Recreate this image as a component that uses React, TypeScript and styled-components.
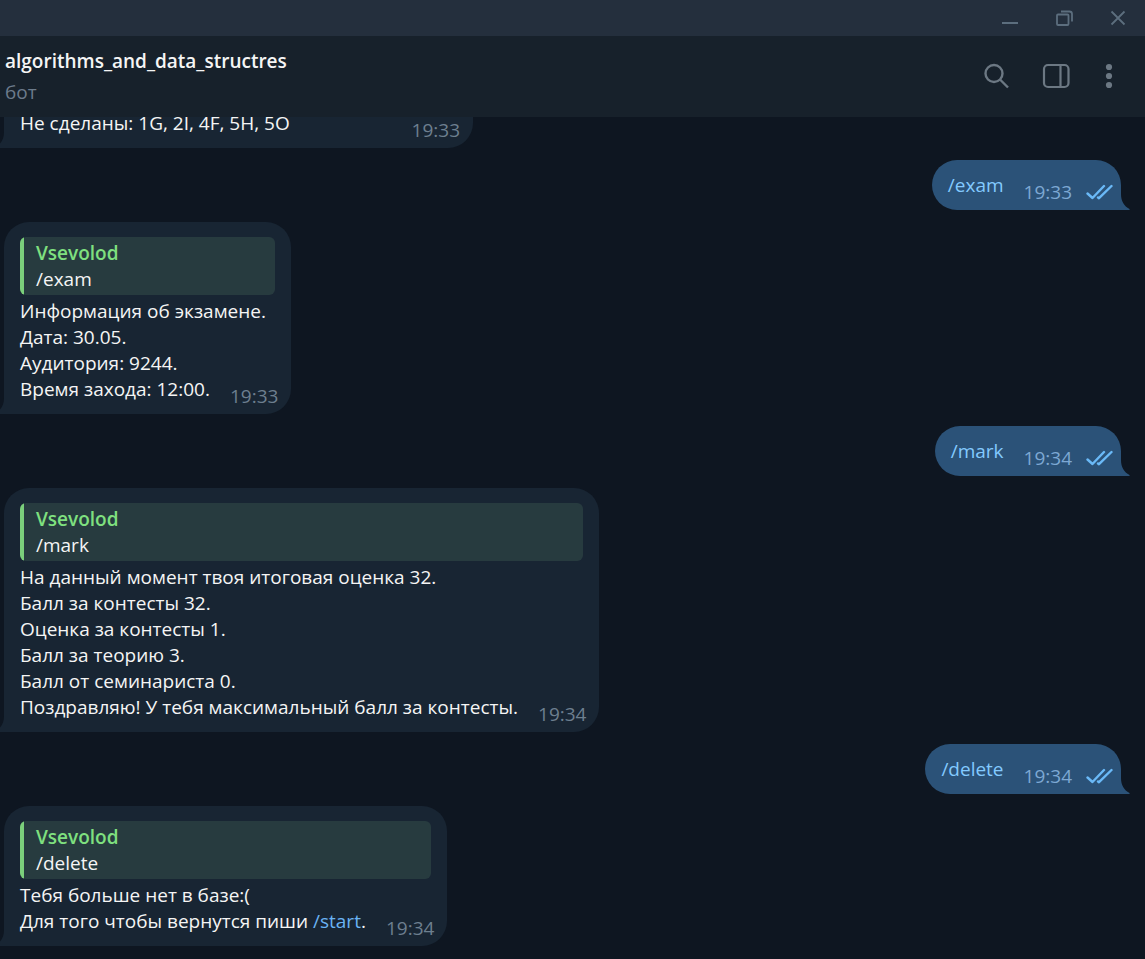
import React from "react";
import styled, { createGlobalStyle, css } from "styled-components";

const GlobalStyle = createGlobalStyle`
  * { box-sizing: border-box; }
  body {
    margin: 0;
    background: #0e1621;
    color: #f5f5f5;
    font-family: "Open Sans", "Noto Sans", sans-serif;
    font-size: 19px;
    line-height: 26px;
  }
`;

const Window = styled.div`
  display: flex;
  flex-direction: column;
  height: 100vh;
`;

const TitleBar = styled.div`
  display: flex;
  flex: none;
  justify-content: flex-end;
  height: 36px;
  background: #242f3d;
`;

const WindowButton = styled.button`
  display: flex;
  align-items: center;
  justify-content: center;
  width: 54px;
  padding: 0;
  border: 0;
  background: none;
  color: #5c6e7e;
`;

const Header = styled.header`
  display: flex;
  flex: none;
  align-items: center;
  justify-content: space-between;
  height: 81px;
  padding: 0 29px 1px 5px;
  background: #17212b;
`;

const Peer = styled.div`
  display: flex;
  flex-direction: column;
  gap: 5px;
`;

const PeerName = styled.h1`
  margin: 0;
  font-size: 19px;
  font-weight: 600;
  line-height: 26px;
`;

const PeerStatus = styled.span`
  color: #6c7b8b;
`;

const Actions = styled.div`
  display: flex;
  align-items: center;
  gap: 32px;
`;

const ActionButton = styled.button`
  display: flex;
  padding: 0;
  border: 0;
  background: none;
  color: #6c7883;
`;

const Chat = styled.main`
  display: flex;
  flex: 1;
  flex-direction: column;
  justify-content: flex-end;
  gap: 12px;
  min-height: 0;
  overflow: hidden;
  padding: 0 24px 13px 4px;
`;

const Bubble = styled.article<{ $out?: boolean; $continued?: boolean }>`
  position: relative;
  flex: none;
  max-width: 100%;
  padding: 12px 16px;
  ${({ $out }) =>
    $out
      ? css`
          align-self: flex-end;
          border-radius: 25px 25px 0 25px;
          background: #2b5278;
          color: #2b5278;
        `
      : css`
          align-self: flex-start;
          border-radius: 25px 25px 25px 0;
          background: #182533;
          color: #182533;
        `}
  ${({ $continued }) =>
    $continued &&
    css`
      min-width: 469px;
      padding-top: 38px;
    `}
`;

const TailShape = styled.svg<{ $out?: boolean }>`
  position: absolute;
  bottom: 0;
  ${({ $out }) => ($out ? "left: 100%;" : "right: 100%; transform: scaleX(-1);")}
`;

const Quote = styled.blockquote`
  margin: 3px 0;
  padding: 3px 16px;
  border-radius: 6px;
  background: linear-gradient(to right, #7bcf7b 4px, #273b3f 4px);
  color: #f5f5f5;
`;

const QuoteAuthor = styled.div`
  color: #7fe07f;
  font-weight: 600;
`;

const Line = styled.div`
  color: #f5f5f5;
`;

const LastLine = styled(Line)`
  display: flex;
  justify-content: space-between;
  gap: 20px;
`;

const Meta = styled.span<{ $out?: boolean }>`
  display: flex;
  align-items: center;
  gap: 14px;
  margin: 7px ${({ $out }) => ($out ? "-8px" : "-3px")} -7px 0;
  color: ${({ $out }) => ($out ? "#7da8d3" : "#6d7f8f")};
`;

const Command = styled.a<{ $out?: boolean }>`
  color: ${({ $out }) => ($out ? "#83caff" : "#6ab3f3")};
  text-decoration: none;
`;

function Tail({ out }: { out?: boolean }) {
  return (
    <TailShape $out={out} width="9" height="16" viewBox="0 0 9 16" aria-hidden="true">
      <path d="M0 0C0 7 3 12 8.500 15Q9.200 16 8 16H0Z" fill="currentColor" />
    </TailShape>
  );
}

function Ticks() {
  return (
    <svg width="27" height="17" viewBox="0 0 27 17" fill="none" stroke="#6ab9f7" strokeWidth="2.400" strokeLinecap="round" strokeLinejoin="round" role="img" aria-label="Прочитано">
      <path d="M1.500 9.500L6.500 14L18 2M12 13.500L13 14.200L25.500 2" />
    </svg>
  );
}

function Outgoing({ command, time }: { command: string; time: string }) {
  return (
    <Bubble $out>
      <LastLine>
        <Command $out href="#">{command}</Command>
        <Meta $out>
          <time>{time}</time>
          <Ticks />
        </Meta>
      </LastLine>
      <Tail out />
    </Bubble>
  );
}

type IncomingProps = {
  quote?: string;
  lines: React.ReactNode[];
  time: string;
  continued?: boolean;
};

function Incoming({ quote, lines, time, continued }: IncomingProps) {
  return (
    <Bubble $continued={continued}>
      {quote && (
        <Quote>
          <QuoteAuthor>Vsevolod</QuoteAuthor>
          <div>{quote}</div>
        </Quote>
      )}
      {lines.slice(0, -1).map((line, i) => (
        <Line key={i}>{line}</Line>
      ))}
      <LastLine>
        <span>{lines[lines.length - 1]}</span>
        <Meta>
          <time>{time}</time>
        </Meta>
      </LastLine>
      <Tail />
    </Bubble>
  );
}

export default function App() {
  return (
    <>
      <GlobalStyle />
      <Window>
        <TitleBar>
          <WindowButton aria-label="Свернуть">
            <svg width="18" height="18" viewBox="0 0 18 18" fill="none" stroke="currentColor" strokeWidth="2">
              <path d="M1 14H17" />
            </svg>
          </WindowButton>
          <WindowButton aria-label="Восстановить">
            <svg width="18" height="18" viewBox="0 0 18 18" fill="none" stroke="currentColor" strokeWidth="1.800">
              <rect x="2" y="5.500" width="11.500" height="10.500" rx="1" />
              <path d="M6 2.500H14.500Q17 2.500 17 5V12.500" />
            </svg>
          </WindowButton>
          <WindowButton aria-label="Закрыть">
            <svg width="18" height="18" viewBox="0 0 18 18" fill="none" stroke="currentColor" strokeWidth="1.800">
              <path d="M2.500 2.500L15.500 15.500M15.500 2.500L2.500 15.500" />
            </svg>
          </WindowButton>
        </TitleBar>
        <Header>
          <Peer>
            <PeerName>algorithms_and_data_structres</PeerName>
            <PeerStatus>бот</PeerStatus>
          </Peer>
          <Actions>
            <ActionButton aria-label="Поиск">
              <svg width="28" height="28" viewBox="0 0 28 28" fill="none" stroke="currentColor" strokeWidth="2.400">
                <circle cx="12" cy="11.500" r="8.500" />
                <path d="M18 17.500L26 25.500" />
              </svg>
            </ActionButton>
            <ActionButton aria-label="Информация">
              <svg width="28" height="28" viewBox="0 0 28 28" fill="none" stroke="currentColor" strokeWidth="2.200">
                <rect x="2" y="3" width="24.500" height="22" rx="4" />
                <path d="M18.500 3V25" />
              </svg>
            </ActionButton>
            <ActionButton aria-label="Меню">
              <svg width="14" height="28" viewBox="0 0 14 28" fill="currentColor">
                <circle cx="7" cy="5" r="3.100" />
                <circle cx="7" cy="14" r="3.100" />
                <circle cx="7" cy="23" r="3.100" />
              </svg>
            </ActionButton>
          </Actions>
        </Header>
        <Chat>
          <Incoming continued lines={["Не сделаны: 1G, 2I, 4F, 5H, 5O"]} time="19:33" />
          <Outgoing command="/exam" time="19:33" />
          <Incoming
            quote="/exam"
            lines={["Информация об экзамене.", "Дата: 30.05.", "Аудитория: 9244.", "Время захода: 12:00."]}
            time="19:33"
          />
          <Outgoing command="/mark" time="19:34" />
          <Incoming
            quote="/mark"
            lines={[
              "На данный момент твоя итоговая оценка 32.",
              "Балл за контесты 32.",
              "Оценка за контесты 1.",
              "Балл за теорию 3.",
              "Балл от семинариста 0.",
              "Поздравляю! У тебя максимальный балл за контесты.",
            ]}
            time="19:34"
          />
          <Outgoing command="/delete" time="19:34" />
          <Incoming
            quote="/delete"
            lines={[
              "Тебя больше нет в базе:(",
              <>Для того чтобы вернутся пиши <Command href="#">/start</Command>.</>,
            ]}
            time="19:34"
          />
        </Chat>
      </Window>
    </>
  );
}
